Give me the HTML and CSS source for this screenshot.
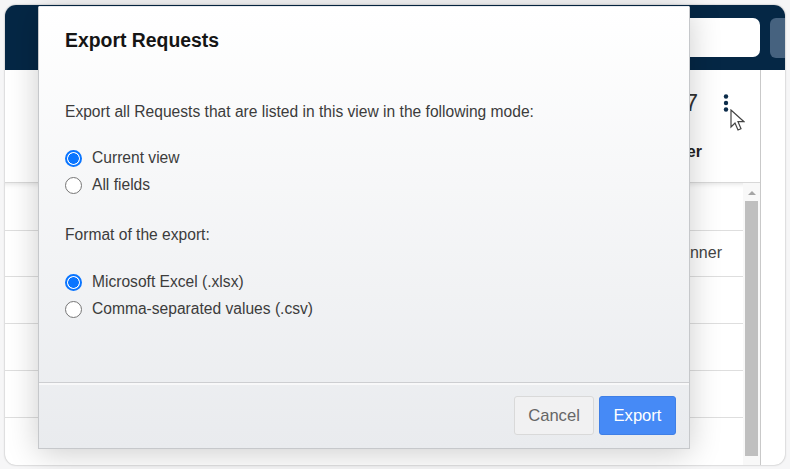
FILE: index.html
```html
<!DOCTYPE html>
<html lang="en">
<head>
<meta charset="utf-8">
<title>Export Requests</title>
<link rel="stylesheet" href="styles.css">
</head>
<body>
<div class="window">
  <header class="topbar">
    <div class="search"></div>
    <div class="topbtn"></div>
  </header>
  <div class="content">
    <div class="main">
      <div class="toolbar">
        <span class="count">7</span>
        <svg class="kebab" width="6" height="18" viewBox="0 0 6 18"><circle cx="3" cy="2.500" r="2.200"/><circle cx="3" cy="9" r="2.200"/><circle cx="3" cy="15.500" r="2.200"/></svg>
        <svg class="cursor" width="15" height="24" viewBox="0 0 15 24"><path d="M1 1v17l4-4 3 7 3-1.300-3-7h6z"/></svg>
      </div>
      <div class="thead"><span class="th">Owner</span></div>
      <div class="tbody">
        <div class="rows">
          <div class="row first"></div>
          <div class="row"><span class="cell">Planner</span></div>
          <div class="row"></div>
          <div class="row"></div>
          <div class="row"></div>
          <div class="row last"></div>
        </div>
        <div class="scrollbar">
          <div class="arrow"></div>
          <div class="thumb"></div>
        </div>
      </div>
    </div>
    <div class="side"></div>
  </div>
</div>
<section class="dialog">
  <h1 class="title">Export Requests</h1>
  <div class="body">
    <p class="text">Export all Requests that are listed in this view in the following mode:</p>
    <div class="group">
      <label class="option"><span class="radio on"></span>Current view</label>
      <label class="option"><span class="radio"></span>All fields</label>
    </div>
    <p class="text format">Format of the export:</p>
    <div class="group second">
      <label class="option"><span class="radio on"></span>Microsoft Excel (.xlsx)</label>
      <label class="option"><span class="radio"></span>Comma-separated values (.csv)</label>
    </div>
  </div>
  <footer class="actions">
    <button class="btn cancel">Cancel</button>
    <button class="btn export">Export</button>
  </footer>
</section>
</body>
</html>
```
FILE: styles.css
```css
* { box-sizing: border-box; }
html, body { margin: 0; height: 100%; }
body {
  width: 790px;
  height: 469px;
  padding: 5px 5px 4px;
  background: #f6f6f7;
  font-family: "Liberation Sans", Arial, sans-serif;
  color: #333;
  overflow: hidden;
  position: relative;
}
.window {
  height: 460px;
  border-radius: 11px;
  overflow: hidden;
  background: #fff;
  display: flex;
  flex-direction: column;
  position: relative;
  box-shadow: 0 0 2px rgba(0,0,0,.35);
}
.topbar {
  height: 65px;
  flex: none;
  background: #052745;
  display: flex;
  justify-content: flex-end;
  align-items: flex-start;
  gap: 10px;
  padding-top: 13px;
}
.search { width: 300px; height: 39px; background: #fff; border-radius: 7px; }
.topbtn { width: 15px; height: 40px; background: #46627f; border-radius: 6px 0 0 6px; }
.content { flex: 1; display: flex; min-height: 0; }
.main { width: 756px; flex: none; border-right: 1px solid #c9c9c9; display: flex; flex-direction: column; }
.side { flex: 1; }
.toolbar {
  height: 72px;
  display: flex;
  justify-content: flex-end;
  position: relative;
  padding: 20px 31px 0 0;
}
.count { font-size: 24px; line-height: 26px; color: #333; margin-right: 25px; }
.kebab { fill: #0c2c4a; margin-top: 4px; }
.cursor {
  position: absolute;
  left: 725px;
  top: 39px;
  fill: #fff;
  stroke: #444;
  stroke-width: 1.2;
}
.thead {
  height: 41px;
  border-bottom: 1px solid #d8d8d8;
  display: flex;
  justify-content: flex-end;
  padding-right: 58px;
}
.th { font-size: 16px; font-weight: 700; line-height: 20px; color: #222; }
.tbody { flex: 1; display: flex; min-height: 0; box-shadow: inset 0 5px 5px -4px rgba(0,0,0,.12); }
.rows { flex: 1; }
.row {
  height: 46.800px;
  border-bottom: 1px solid #dedede;
  display: flex;
  justify-content: flex-end;
  align-items: center;
  padding-right: 21px;
}
.row.first { height: 47.500px; }
.row.last { border-bottom: 0; }
.cell { font-size: 16px; color: #444; }
.scrollbar { width: 17px; flex: none; padding: 0 2px; background: #f8f8f8; }
.arrow {
  width: 0;
  height: 0;
  margin: 8px auto 6px;
  border: 4px solid transparent;
  border-top: 0;
  border-bottom: 4px solid #a5a5a5;
}
.thumb { height: 255px; background: #bfbfbf; width: 13px; }
.dialog {
  position: absolute;
  left: 38px;
  top: 6px;
  width: 652px;
  height: 443px;
  background: linear-gradient(#ffffff, #e9ebee);
  border: 1px solid #c6c8cb;
  border-top-color: transparent;
  display: flex;
  flex-direction: column;
  box-shadow: 0 4px 30px rgba(0,0,0,.2);
}
.title { margin: 0; padding: 22px 26px 0; font-size: 19.400px; line-height: 22px; font-weight: 700; color: #151515; height: 66px; }
.body { flex: 1; padding: 30px 26px 0; color: #333; }
.text { margin: 0; line-height: 18px; font-size: 15.600px; color: #3c3c3c; }
.group { margin-top: 28px; display: flex; flex-direction: column; gap: 9px; }
.group.second { margin-top: 29px; }
.format { margin-top: 32px; }
.option { display: flex; align-items: center; gap: 10px; height: 18px; font-size: 15.600px; color: #3c3c3c; }
.radio {
  width: 17px;
  height: 17px;
  border-radius: 50%;
  background: #fff;
  border: 1.5px solid #767676;
  flex: none;
}
.radio.on { border: 2px solid #0a75ff; background: radial-gradient(circle, #0a75ff 0 5px, #fff 5.600px); }
.actions {
  height: 66px;
  flex: none;
  border-top: 1px solid #cdced1;
  box-shadow: inset 0 2px 0 #f8f8f9;
  display: flex;
  justify-content: flex-end;
  align-items: center;
  gap: 5px;
  padding: 0 13px 0 0;
}
.btn { height: 39px; border-radius: 3px; font-family: inherit; font-size: 16.600px; padding: 0; }
.cancel { width: 80px; background: #f1f1f2; border: 1px solid #d9d9d9; color: #666; }
.export { width: 77px; background: #468af6; border: 1px solid #3f7fe6; color: #fff; }
```
